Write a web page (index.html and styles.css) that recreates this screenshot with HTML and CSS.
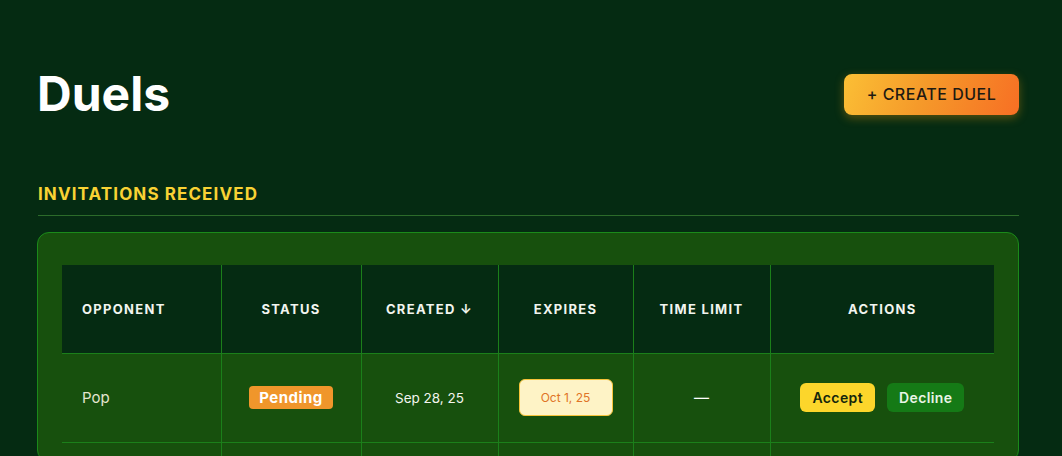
FILE: index.html
```html
<!DOCTYPE html>
<html lang="en">
<head>
<meta charset="utf-8">
<title>Duels</title>
<link rel="stylesheet" href="styles.css">
</head>
<body>
<main class="page">
  <header class="page-header">
    <h1 class="title">Duels</h1>
    <button class="create-btn">+ CREATE DUEL</button>
  </header>
  <section class="section">
    <h2 class="section-title">INVITATIONS RECEIVED</h2>
    <div class="card">
      <table class="duels-table">
        <thead>
          <tr>
            <th class="col-opponent">OPPONENT</th>
            <th class="col-status">STATUS</th>
            <th class="col-created">CREATED ↓</th>
            <th class="col-expires">EXPIRES</th>
            <th class="col-limit">TIME LIMIT</th>
            <th class="col-actions">ACTIONS</th>
          </tr>
        </thead>
        <tbody>
          <tr>
            <td class="opponent">Pop</td>
            <td><span class="badge-pending">Pending</span></td>
            <td class="date">Sep 28, 25</td>
            <td><span class="badge-expires">Oct 1, 25</span></td>
            <td class="dash">—</td>
            <td><div class="actions"><button class="btn-accept">Accept</button><button class="btn-decline">Decline</button></div></td>
          </tr>
          <tr class="spacer-row">
            <td></td><td></td><td></td><td></td><td></td><td></td>
          </tr>
        </tbody>
      </table>
    </div>
  </section>
</main>
</body>
</html>
```
FILE: styles.css
```css
* { box-sizing: border-box; }
html, body { margin: 0; padding: 0; overflow: hidden; }
body {
  background: #052b12;
  font-family: Inter, "Noto Sans", sans-serif;
  color: #fff;
  height: 456px;
}
.page {
  padding: 66px 43px 0 37px;
  height: 456px;
  overflow: hidden;
}
.page-header {
  display: flex;
  align-items: center;
  justify-content: space-between;
  height: 56px;
}
.title {
  margin: 0;
  font-size: 48px;
  font-weight: 700;
  line-height: 56px;
}
.create-btn {
  width: 175px;
  height: 41px;
  border: none;
  border-radius: 8px;
  background: linear-gradient(110deg, #fbbf35 0%, #f59a2a 45%, #f76f24 100%);
  color: #1f1a12;
  font-family: Inter, sans-serif;
  font-size: 16px;
  font-weight: 500;
  letter-spacing: 0.5px;
  box-shadow: 0 3px 10px rgba(245, 158, 11, 0.35);
}
.section { margin-top: 60px; }
.section-title {
  margin: 0 0 0 1px;
  color: #f9d234;
  font-size: 17px;
  font-weight: 700;
  letter-spacing: 1.1px;
  line-height: 24px;
  padding-bottom: 9px;
  border-bottom: 1px solid #2c6b2a;
}
.card {
  margin-top: 16px;
  background: #17500d;
  border: 1px solid #1b8a1a;
  border-radius: 12px;
  padding: 32px 24px 0 24px;
  height: 230px;
}
.duels-table {
  width: 100%;
  border-collapse: collapse;
  table-layout: fixed;
}
.duels-table th {
  background: #052b12;
  height: 88px;
  font-size: 13px;
  font-weight: 700;
  letter-spacing: 1.3px;
  color: #f2f5ef;
  text-align: center;
  border-left: 1px solid #1b7f1a;
  border-bottom: 1px solid #1b7f1a;
  padding: 0;
}
.duels-table th:first-child { border-left: none; text-align: left; padding-left: 20px; }
.col-opponent { width: 159px; }
.col-status { width: 140px; }
.col-created { width: 137px; }
.col-expires { width: 135px; }
.col-limit { width: 137px; }
.duels-table td {
  height: 89px;
  text-align: center;
  border-left: 1px solid #1b7f1a;
  border-bottom: 1px solid #1b7f1a;
  padding: 0;
  font-size: 13px;
}
.duels-table td:first-child { border-left: none; }
.opponent {
  text-align: left !important;
  padding-left: 20px !important;
  font-size: 15px !important;
  color: #e4e6cf;
}
.date { color: #f3f5ee; font-size: 13.5px !important; }
.dash { font-size: 15px !important; }
.badge-pending {
  display: inline-block;
  background: #f0962b;
  color: #fff;
  font-size: 15px;
  font-weight: 700;
  letter-spacing: 0.5px;
  line-height: 23px;
  padding: 0 10px;
  border-radius: 4px;
}
.badge-expires {
  display: inline-block;
  background: #fef3c6;
  border: 1px solid #f6c33a;
  color: #e07426;
  font-size: 12px;
  line-height: 35px;
  width: 94px;
  border-radius: 6px;
}
.actions {
  display: flex;
  justify-content: center;
  gap: 12px;
}
.btn-accept, .btn-decline {
  border: none;
  height: 29px;
  border-radius: 6px;
  font-family: Inter, sans-serif;
  font-size: 14px;
  font-weight: 600;
  letter-spacing: 0.4px;
  padding: 0;
}
.btn-accept { background: #fcd62b; color: #14260c; width: 75px; }
.btn-decline { background: #157a16; color: #e9f5e6; width: 77px; }
.spacer-row td { height: 60px; }
```
